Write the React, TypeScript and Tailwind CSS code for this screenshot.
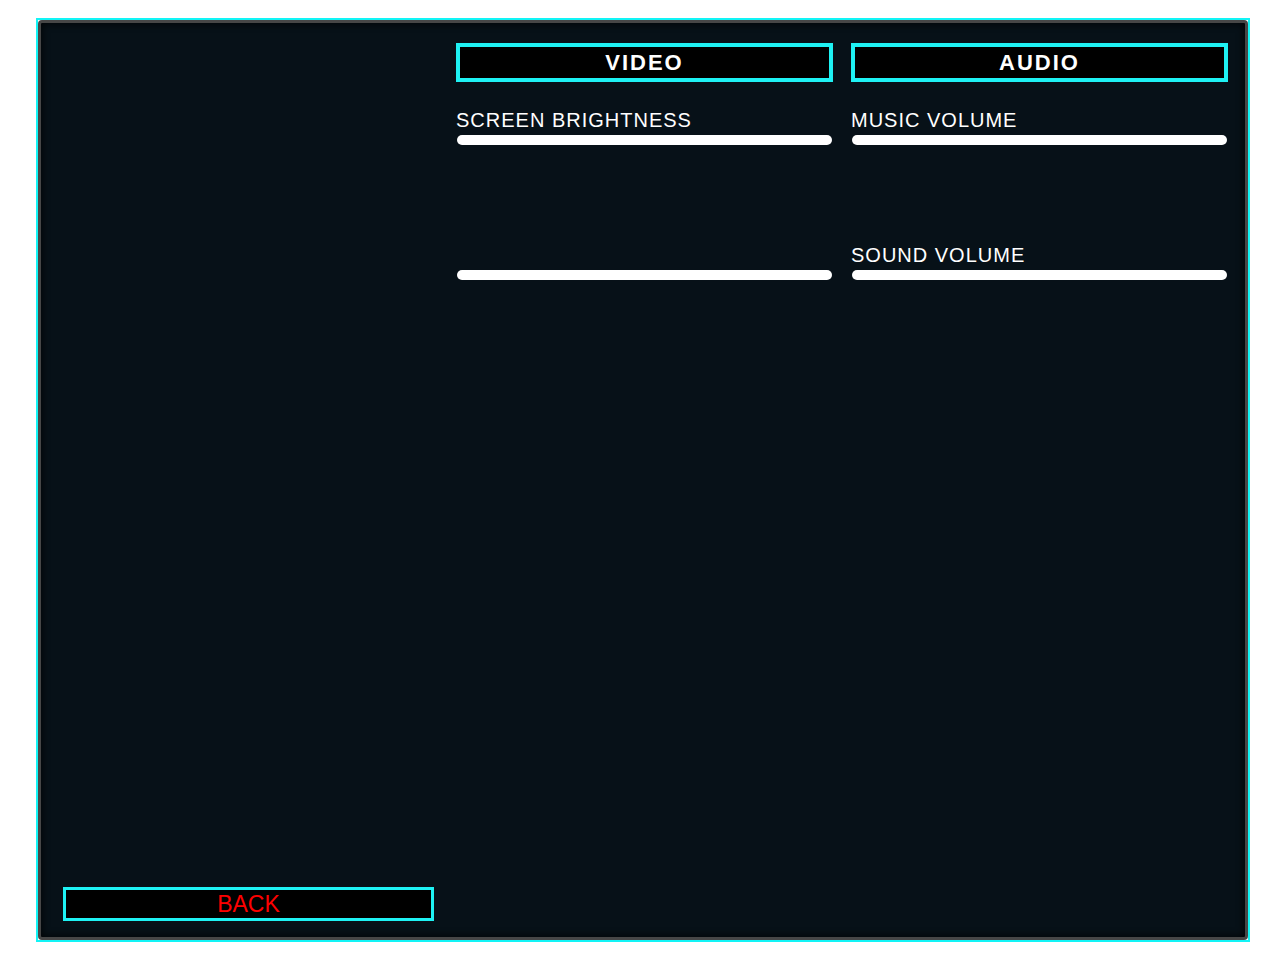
const Slider = () => <div className="w-[375px] h-[10px] rounded-full bg-white ml-[1px]" />;

const Setting = ({ label }: { label?: string }) => (
  <div className="flex flex-col mb-[100px]">
    <div className="h-[20px] text-[20px] leading-[20px] tracking-[1px] text-white whitespace-nowrap">{label}</div>
    <div className="mt-[5px]">
      <Slider />
    </div>
  </div>
);

const TabButton = ({ title }: { title: string }) => (
  <button className="w-[377px] h-[39px] border-4 border-[#1ef2f4] bg-black text-white text-[22px] font-bold tracking-[2px] leading-none flex items-center justify-center">
    {title}
  </button>
);

export default function App() {
  return (
    <div className="min-h-[960px] bg-white pl-[36px] pt-[18px]" style={{ fontFamily: '"Liberation Sans", Arial, sans-serif' }}>
      <div className="w-[1214px] h-[924px] border-2 border-[#12f4f6]">
        <div className="h-full border-[3px] border-[#474747] rounded-[4px] bg-[#071118] shadow-[inset_0_0_8px_rgba(0,0,0,0.9)] flex">
          {/* Left column */}
          <div className="w-[415px] flex flex-col justify-end pl-[22px] pb-[16px]">
            <button className="w-[371px] h-[34px] border-[3px] border-[#1ef2f4] bg-black text-[#ff0000] text-[23px] leading-none flex items-center justify-center">
              BACK
            </button>
          </div>

          {/* Settings */}
          <div className="pt-[20px] grid grid-cols-[377px_377px] gap-x-[18px] content-start">
            <div className="flex flex-col">
              <TabButton title="VIDEO" />
              <div className="mt-[28px]">
                <Setting label="SCREEN BRIGHTNESS" />
                <Setting />
              </div>
            </div>
            <div className="flex flex-col">
              <TabButton title="AUDIO" />
              <div className="mt-[28px]">
                <Setting label="MUSIC VOLUME" />
                <Setting label="SOUND VOLUME" />
              </div>
            </div>
          </div>
        </div>
      </div>
    </div>
  );
}
